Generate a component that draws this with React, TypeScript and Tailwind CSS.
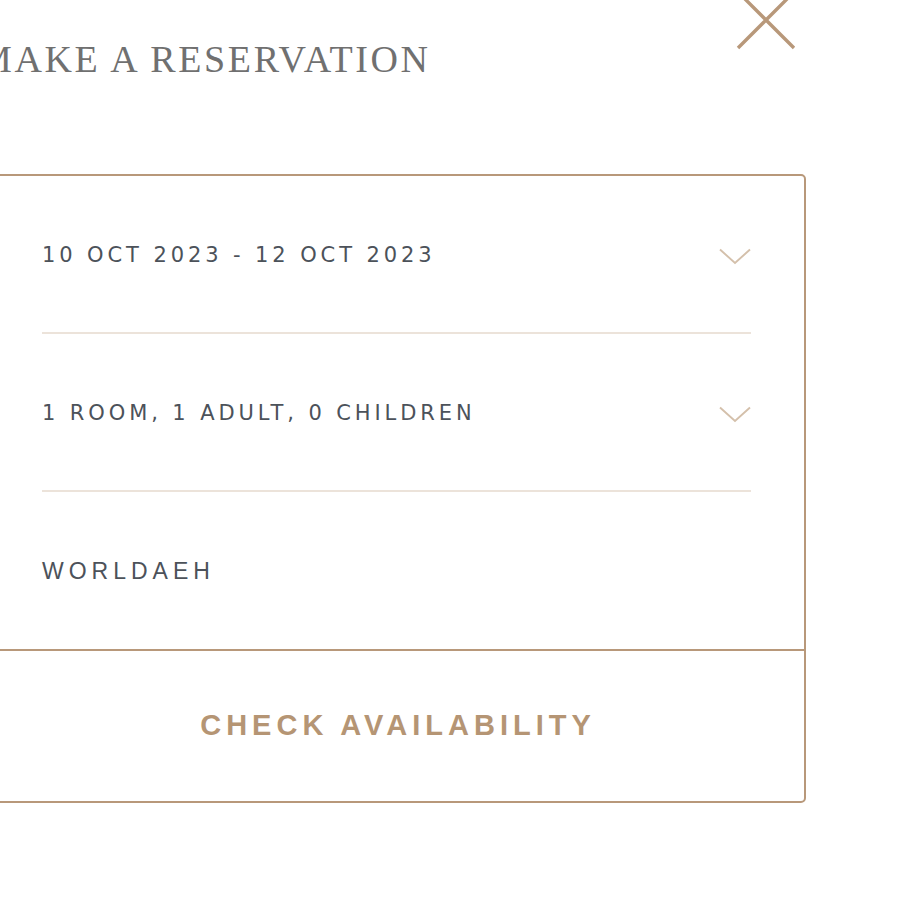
import React from "react";

const rows = [
  { label: "10 OCT 2023 - 12 OCT 2023", chevron: true },
  { label: "1 ROOM, 1 ADULT, 0 CHILDREN", chevron: true },
];

function Chevron() {
  return (
    <svg width="32" height="17" viewBox="0 0 32 17" fill="none" className="shrink-0">
      <path d="M1 1.5 L16 15 L31 1.5" stroke="#d4c0ab" strokeWidth="1.9" />
    </svg>
  );
}

export default function App() {
  return (
    <div className="h-[900px] w-[900px] overflow-hidden bg-white">
      {/* header */}
      <div className="flex h-[174px] items-start justify-between">
        <h1 className="-ml-[22px] mt-[40px] text-[38px] leading-[38px] tracking-[2.6px] text-[#707070] [font-family:'Liberation_Serif',serif]">
          MAKE A RESERVATION
        </h1>
        <button type="button" className="-mt-[12px] mr-[102px]">
          <svg width="64" height="64" viewBox="0 0 64 64" fill="none">
            <path d="M4 4 L60 60 M60 4 L4 60" stroke="#b8987a" strokeWidth="3.4" />
          </svg>
        </button>
      </div>

      {/* reservation box */}
      <div className="-ml-[10px] w-[816px] rounded-[5px] border-2 border-[#b8987a]">
        {rows.map((row) => (
          <div
            key={row.label}
            className="ml-[50px] mr-[53px] flex h-[158px] items-center justify-between border-b-2 border-[#ece3da] pt-[4px]"
          >
            <span className="text-[21px] tracking-[3.9px] text-[#4c525a] [font-family:'DejaVu_Sans',sans-serif]">
              {row.label}
            </span>
            {row.chevron && <Chevron />}
          </div>
        ))}
        <div className="ml-[50px] mr-[53px] flex h-[157px] items-center pt-[2px]">
          <span className="text-[23px] tracking-[5px] text-[#4c525a] [font-family:'Liberation_Sans',sans-serif]">
            WORLDAEH
          </span>
        </div>
        <button
          type="button"
          className="flex h-[152px] w-full items-center justify-center border-t-2 border-[#b8987a]"
        >
          <span className="text-[29px] font-bold tracking-[5px] text-[#b59574] [font-family:'Liberation_Sans',sans-serif]">
            CHECK AVAILABILITY
          </span>
        </button>
      </div>
    </div>
  );
}
